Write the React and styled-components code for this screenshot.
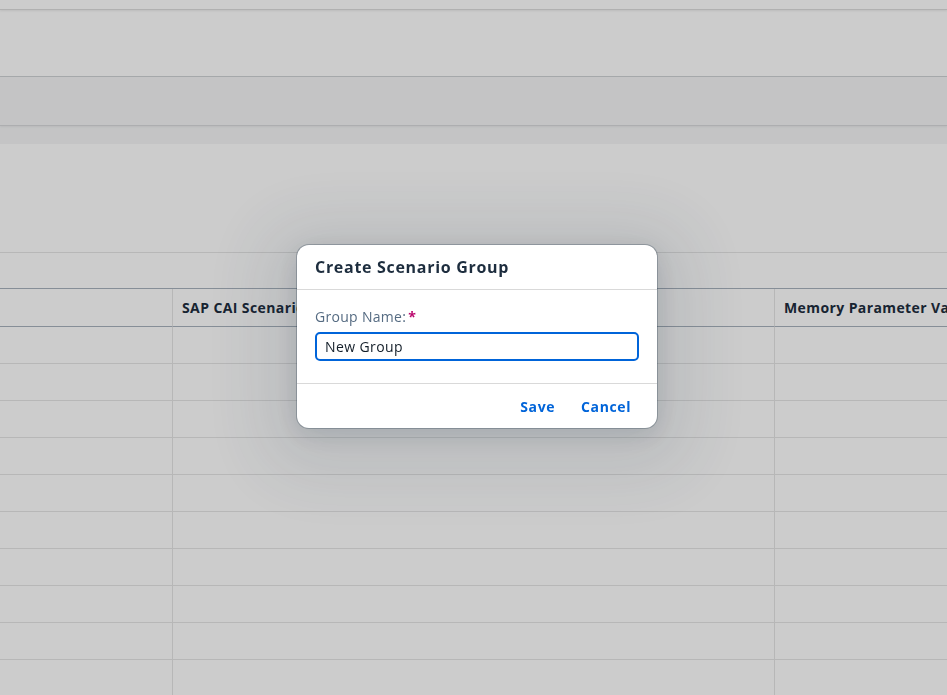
import React from "react";
import styled, { createGlobalStyle } from "styled-components";

const FONT = `"Open Sans", "Liberation Sans", Arial, sans-serif`;

const Global = createGlobalStyle`
  html, body { margin: 0; padding: 0; background: #fff; overflow: hidden; }
  body { font-family: ${FONT}; color: #1d2d3e; }
  * { box-sizing: border-box; }
`;

const Page = styled.div`
  width: 947px;
  height: 695px;
  display: flex;
  flex-direction: column;
  background: #fff;
  overflow: hidden;
`;

const TopStrip = styled.div`
  height: 10px;
  flex: none;
  background: #fff;
  border-bottom: 1px solid #dcdcdc;
  box-shadow: 0 1px 2px rgba(0, 0, 0, 0.08);
  position: relative;
  z-index: 2;
`;

const ObjectHeader = styled.div`
  height: 67px;
  flex: none;
  background: #fff;
  border-bottom: 1px solid #d0d3d6;
`;

const TabBand = styled.div`
  height: 49px;
  flex: none;
  background: #f5f6f7;
  border-bottom: 1px solid #d9dadc;
  box-shadow: 0 1px 2px rgba(0, 0, 0, 0.06);
  position: relative;
  z-index: 1;
`;

const SubBand = styled.div`
  height: 18px;
  flex: none;
  background: #f5f6f7;
`;

const SectionSpace = styled.div`
  height: 109px;
  flex: none;
  background: #fff;
  border-bottom: 1px solid #e5e5e5;
`;

const TableToolbar = styled.div`
  height: 35px;
  flex: none;
  background: #fff;
`;

const Table = styled.div`
  display: grid;
  grid-template-columns: 173px 602px 1fr;
  border-top: 1px solid #a8b2bd;
`;

const HeadCell = styled.div`
  height: 38px;
  padding: 0 9px;
  display: flex;
  align-items: center;
  font-size: 14px;
  font-weight: 700;
  letter-spacing: 0.4px;
  color: #1d2d3e;
  white-space: nowrap;
  overflow: hidden;
  border-bottom: 1px solid #a8b2bd;
  border-right: ${(p) => (p.$last ? "none" : "1px solid #e5e5e5")};
`;

const Cell = styled.div`
  height: 37px;
  border-bottom: 1px solid #e5e5e5;
  border-right: ${(p) => (p.$last ? "none" : "1px solid #e5e5e5")};
`;

const BlockLayer = styled.div`
  position: fixed;
  inset: 0;
  background: rgba(0, 0, 0, 0.2);
  z-index: 10;
`;

const Dialog = styled.div`
  position: fixed;
  left: 297px;
  top: 245px;
  width: 360px;
  background: #fff;
  border-radius: 12px;
  z-index: 11;
  display: flex;
  flex-direction: column;
  box-shadow: 0 0 0 1px rgba(34, 53, 72, 0.28), 0 12px 70px 36px rgba(34, 53, 72, 0.1),
    0 6px 24px rgba(34, 53, 72, 0.15);
`;

const DialogHeader = styled.div`
  height: 45px;
  padding: 0 18px;
  display: flex;
  align-items: center;
  border-bottom: 1px solid #d9d9d9;
`;

const Title = styled.h1`
  margin: 0;
  font-size: 16px;
  font-weight: 700;
  letter-spacing: 0.7px;
  color: #1d2d3e;
`;

const DialogBody = styled.div`
  padding: 18px 18px 22px;
  display: flex;
  flex-direction: column;
  gap: 6px;
  border-bottom: 1px solid #d9d9d9;
`;

const Label = styled.label`
  font-size: 14px;
  letter-spacing: 0.3px;
  color: #556b82;
  line-height: 18px;
  display: flex;
  align-items: baseline;
  gap: 2px;
`;

const Required = styled.span`
  color: #ba066c;
  font-weight: 700;
`;

const Input = styled.input`
  height: 29px;
  width: 100%;
  margin: 0;
  padding: 0 8px;
  border: 2px solid #0064d9;
  border-radius: 5px;
  font-family: ${FONT};
  font-size: 14px;
  letter-spacing: 0.4px;
  color: #131e29;
  outline: none;
  background: #fff;
`;

const DialogFooter = styled.div`
  height: 44px;
  padding: 0 16px 0 0;
  display: flex;
  align-items: center;
  justify-content: flex-end;
  gap: 6px;
`;

const TextButton = styled.button`
  background: transparent;
  border: none;
  padding: 0 10px;
  height: 32px;
  font-family: ${FONT};
  font-size: 14px;
  font-weight: 700;
  letter-spacing: 0.6px;
  color: #0064d9;
  cursor: pointer;
`;

const ROWS = 10;

export default function App() {
  return (
    <>
      <Global />
      <Page>
        <TopStrip />
        <ObjectHeader />
        <TabBand />
        <SubBand />
        <SectionSpace />
        <TableToolbar />
        <Table>
          <HeadCell />
          <HeadCell>SAP CAI Scenario</HeadCell>
          <HeadCell $last>Memory Parameter Value</HeadCell>
          {Array.from({ length: ROWS }).map((_, i) => (
            <React.Fragment key={i}>
              <Cell />
              <Cell />
              <Cell $last />
            </React.Fragment>
          ))}
        </Table>
      </Page>
      <BlockLayer />
      <Dialog role="dialog" aria-labelledby="dlg-title">
        <DialogHeader>
          <Title id="dlg-title">Create Scenario Group</Title>
        </DialogHeader>
        <DialogBody>
          <Label htmlFor="group-name">
            Group Name:<Required>*</Required>
          </Label>
          <Input id="group-name" defaultValue="New Group" />
        </DialogBody>
        <DialogFooter>
          <TextButton>Save</TextButton>
          <TextButton>Cancel</TextButton>
        </DialogFooter>
      </Dialog>
    </>
  );
}
